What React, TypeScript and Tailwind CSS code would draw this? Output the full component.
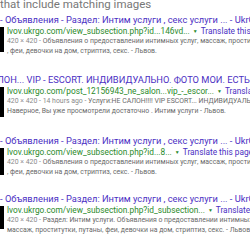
const results = [
  {
    title: "- Объявления - Раздел: Интим услуги , секс услуги ... - UkrGo",
    shift: "",
    url: "lvov.ukrgo.com/view_subsection.php?id...146vd...",
    meta: "420 × 420 - ",
    l1: "Объявления о предоставлении интимных услуг, массаж, проститутки, путаны,",
    l2: ", феи, девочки на дом, стриптиз, секс. - Львов.",
    thumb: "h-[25px]",
    gap: "mt-[3px]",
  },
  {
    title: "САЛОН... VIP - ESCORT. ИНДИВИДУАЛЬНО. ФОТО МОИ. ЕСТЬ",
    shift: "-ml-[15px]",
    url: "lvov.ukrgo.com/post_12156943_ne_salon...vip_-_escor...",
    meta: "420 × 420 - 14 hours ago - ",
    l1: "Услуги:НЕ САЛОН!!!! VIP ESCORT... ИНДИВИДУАЛЬНО. ФОТО",
    l2: "Наверное, Вы уже просмотрели достаточно . Интим услуги - Львов.",
    thumb: "h-[30px]",
    gap: "mt-[18px]",
  },
  {
    title: "- Объявления - Раздел: Интим услуги , секс услуги ... - UkrGo",
    shift: "",
    url: "lvov.ukrgo.com/view_subsection.php?id...8...",
    meta: "420 × 420 - ",
    l1: "Объявления о предоставлении интимных услуг, массаж, проститутки, путаны,",
    l2: ", феи, девочки на дом, стриптиз, секс. - Львов.",
    thumb: "h-[27px]",
    gap: "mt-[18px]",
  },
  {
    title: "- Объявления - Раздел: Интим услуги , секс услуги ... - UkrGo",
    shift: "",
    url: "lvov.ukrgo.com/view_subsection.php?id_subsection...",
    meta: "420 × 420 - ",
    l1: "Раздел: Интим услуги. Объявления о предоставлении интимных услуг,",
    l2: "массаж, проститутки, путаны, феи, девочки на дом, стриптиз, секс. - Львов.",
    thumb: "h-[23px]",
    gap: "mt-[16px]",
  },
];

export default function App() {
  return (
    <div className="w-[250px] h-[250px] overflow-hidden bg-white font-['Roboto',sans-serif]">
      <div className="-mt-[2px] text-[11.5px] leading-[13px] text-[#777] whitespace-nowrap">
        that include matching images
      </div>
      {results.map((r, i) => (
        <div key={i} className={r.gap}>
          <div className={`text-[9.3px] leading-[12px] text-[#4b2fc3] whitespace-nowrap ${r.shift}`}>
            {r.title}
          </div>
          <div className="flex">
            <div className={`w-[4px] ${r.thumb} bg-black shrink-0 mt-[1px]`} />
            <div className="ml-[3px] min-w-0 whitespace-nowrap">
              <div className="text-[8.3px] leading-[10px] flex items-center">
                <span className="text-[#2a8a2a]">{r.url}</span>
                <span className="text-[#2a8a2a] text-[5px] mx-[3px]">▼</span>
                <span className="text-[#4b2fc3]">Translate this page</span>
              </div>
              <div className="text-[6.9px] leading-[10px] text-[#6a6a6a]">
                <span className="text-[#8a8a8a]">{r.meta}</span>
                {r.l1}
              </div>
              <div className="text-[6.9px] leading-[10px] text-[#6a6a6a]">{r.l2}</div>
            </div>
          </div>
        </div>
      ))}
    </div>
  );
}
